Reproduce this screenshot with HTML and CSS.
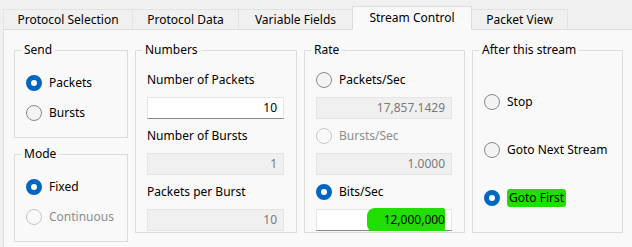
FILE: index.html
```html
<!DOCTYPE html>
<html lang="en">
  <head>
    <meta charset="UTF-8" />
    <title>Stream Control</title>
    <link rel="stylesheet" href="styles.css">
  </head>
  <body>
    <div class="tabs">
      <div class="tab tab-selection">Protocol Selection</div>
      <div class="tab tab-data">Protocol Data</div>
      <div class="tab tab-fields">Variable Fields</div>
      <div class="tab tab-stream active">Stream Control</div>
      <div class="tab tab-view">Packet View</div>
    </div>

    <div class="panel">
      <div class="column">
        <fieldset class="group small">
          <legend>Send</legend>
          <div class="radio-list">
            <div class="radio-row"><span class="radio checked"></span>Packets</div>
            <div class="radio-row"><span class="radio"></span>Bursts</div>
          </div>
        </fieldset>
        <fieldset class="group small">
          <legend>Mode</legend>
          <div class="radio-list">
            <div class="radio-row"><span class="radio checked"></span>Fixed</div>
            <div class="radio-row disabled"><span class="radio"></span>Continuous</div>
          </div>
        </fieldset>
      </div>

      <fieldset class="group">
        <legend>Numbers</legend>
        <div class="field-list">
          <div class="field-label">Number of Packets</div>
          <div class="input">10</div>
          <div class="field-label">Number of Bursts</div>
          <div class="input disabled">1</div>
          <div class="field-label">Packets per Burst</div>
          <div class="input disabled">10</div>
        </div>
      </fieldset>

      <fieldset class="group">
        <legend>Rate</legend>
        <div class="field-list">
          <div class="radio-row"><span class="radio"></span>Packets/Sec</div>
          <div class="input disabled">17,857.1429</div>
          <div class="radio-row disabled"><span class="radio"></span>Bursts/Sec</div>
          <div class="input disabled">1.0000</div>
          <div class="radio-row"><span class="radio checked"></span>Bits/Sec</div>
          <div class="input"><span class="mark wide">12,000,000</span></div>
        </div>
      </fieldset>

      <fieldset class="group">
        <legend>After this stream</legend>
        <div class="radio-list spread">
          <div class="radio-row"><span class="radio"></span>Stop</div>
          <div class="radio-row"><span class="radio"></span>Goto Next Stream</div>
          <div class="radio-row"><span class="radio checked"></span><span class="mark">Goto First</span></div>
        </div>
      </fieldset>
    </div>
  </body>
</html>
```

FILE: styles.css
```css
body {
  margin: 0;
  background-color: #f0f0f0;
  font-family: "Noto Sans", sans-serif;
  font-size: 12px;
  color: #000;
  height: 247px;
  overflow: hidden;
}

.tabs {
  display: flex;
  align-items: flex-end;
  height: 29px;
  padding-left: 3px;
}

.tab {
  box-sizing: border-box;
  height: 20px;
  line-height: 19px;
  text-align: center;
  border: 1px solid #e3e3e3;
  border-bottom: none;
  margin-right: -1px;
  background-color: #f0f0f0;
  position: relative;
}

.tab-selection { width: 130px; }
.tab-data { width: 107px; }
.tab-fields { width: 115px; }
.tab-stream { width: 120px; }
.tab-view { width: 97px; }

.tab.active {
  height: 24px;
  line-height: 22px;
  margin-bottom: -1px;
  background-color: #f9f9f9;
  border-color: #dcdcdc;
  z-index: 1;
}

.panel {
  display: grid;
  grid-template-columns: 114px 162px 161px 151px;
  column-gap: 7px;
  margin-left: 3px;
  padding: 12px 0 0 10px;
  height: 206px;
  background-color: #f9f9f9;
  border-top: 1px solid #dcdcdc;
  border-left: 1px solid #dcdcdc;
}

.column {
  display: flex;
  flex-direction: column;
  gap: 8px;
}

.group {
  margin: 0;
  padding: 0 0 0 11px;
  min-width: 0;
  border: 1px solid #dcdcdc;
  height: 191px;
  box-sizing: border-box;
}

.group.small {
  height: 96px;
}

.group legend {
  padding: 0 3px;
  margin-left: -5px;
  line-height: 16px;
}

.radio-list {
  display: flex;
  flex-direction: column;
  gap: 14px;
  padding-top: 17px;
}

.radio-list.spread {
  gap: 32px;
  padding-top: 36px;
}

.radio-row {
  display: flex;
  align-items: center;
  gap: 7px;
  height: 16px;
  line-height: 16px;
  white-space: nowrap;
}

.radio-row.disabled {
  color: #8d8d8d;
}

.radio {
  width: 14px;
  height: 14px;
  border-radius: 50%;
  border: 1px solid #8a8a8a;
  background-color: #f3f3f3;
  flex-shrink: 0;
}

.radio.checked {
  width: 6px;
  height: 6px;
  border: 5px solid #0067c0;
  background-color: #fff;
}

.disabled .radio {
  border-color: #c6c6c6;
  background-color: #f9f9f9;
}

.field-list {
  display: flex;
  flex-direction: column;
  padding-top: 14px;
  padding-right: 12px;
}

.field-label {
  height: 16px;
  line-height: 16px;
  white-space: nowrap;
}

.input {
  margin: 9px 0 9px 0;
  height: 20px;
  line-height: 20px;
  padding-right: 6px;
  text-align: right;
  background-color: #fff;
  border: 1px solid #e5e5e5;
  border-bottom-color: #868686;
}

.input.disabled {
  background-color: #f0f0f0;
  border-bottom-color: #e5e5e5;
  color: #7a7a7a;
}

.mark {
  background-color: #22dd00;
  padding: 1px 2px;
  border-radius: 3px;
}

.mark.wide {
  padding: 3px 0 3px 17px;
  border-radius: 8px 2px 2px 6px;
}
```
